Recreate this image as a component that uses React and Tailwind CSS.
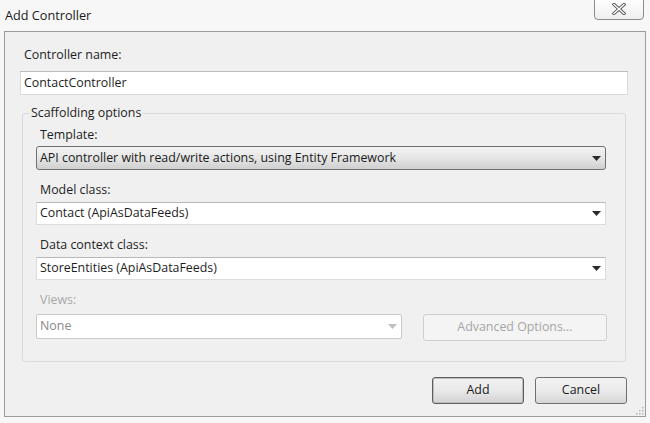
import React from 'react'

const font = { fontFamily: '"Open Sans", "Noto Sans", sans-serif' }

function Arrow({ className = 'text-[#2b2b2b]' }) {
  return (
    <svg width="9" height="5" viewBox="0 0 9 5" className={className}>
      <path d="M0 0 H9 L4.5 5 Z" fill="currentColor" />
    </svg>
  )
}

function Label({ children, disabled, className = '' }) {
  return (
    <div className={`h-4 leading-4 text-[12.4px] ${disabled ? 'text-[#a8a8a8]' : 'text-[#1e1e1e]'} ${className}`}>
      {children}
    </div>
  )
}

function Combo({ value, className = '', disabled }) {
  return (
    <div className={`flex items-center justify-between bg-white border ${disabled ? 'border-[#c9c9c9] rounded-[2px]' : 'border-[#dcdcdc] border-t-[#b8b8b8]'} ${className}`}>
      <span className={`pl-[3px] text-[12.4px] ${disabled ? 'text-[#8a8a8a]' : 'text-[#1e1e1e]'}`}>{value}</span>
      <span className="pr-[4px] flex items-center">
        <Arrow className={disabled ? 'text-[#c0c0c0]' : 'text-[#2b2b2b]'} />
      </span>
    </div>
  )
}

function Button({ children, primary, disabled, className = '' }) {
  return (
    <div
      className={`flex items-center justify-center rounded-[3px] border text-[12.4px] ${
        disabled
          ? 'border-[#cfcfcf] bg-[#f4f4f4] text-[#a6a6a6]'
          : primary
          ? 'border-[#5e5e5e] bg-gradient-to-b from-[#f2f2f2] via-[#e9e9e9] to-[#d2d2d2] text-[#1a1a1a] shadow-[inset_0_0_0_1px_#bdbdbd]'
          : 'border-[#707070] bg-gradient-to-b from-[#f2f2f2] via-[#ebebeb] to-[#d6d6d6] text-[#1a1a1a]'
      } ${className}`}
    >
      {children}
    </div>
  )
}

export default function App() {
  return (
    <div style={font} className="w-[650px] h-[423px] bg-[#f7f7f7] overflow-hidden">
      <div className="h-[31px] flex justify-between">
        <div className="pl-[5px] pt-[6px] text-[12.7px] text-[#1a1a1a] leading-[18px]">Add Controller</div>
        <div className="mr-[6px] -mt-[2px] w-[50px] h-[22px] rounded-b-[4px] border border-[#8c8c8c] bg-gradient-to-b from-[#ffffff] to-[#efefef] flex items-center justify-center">
          <svg width="14" height="12" viewBox="0 0 14 12">
            <path d="M2 1.5 L12 10.5 M12 1.5 L2 10.5" stroke="#555" strokeWidth="3.2" strokeLinecap="square" />
            <path d="M2 1.5 L12 10.5 M12 1.5 L2 10.5" stroke="#fff" strokeWidth="1.4" strokeLinecap="square" />
          </svg>
        </div>
      </div>

      <div className="relative ml-[4px] w-[642px] h-[386px] border border-[#9c9c9c] bg-[#f0f0f0]">
        <Label className="ml-[19px] mt-[15px]">Controller name:</Label>
        <div className="ml-[15px] mt-[8px] w-[608px] h-[24px] bg-white border border-[#d9d9d9] border-t-[#bcbcbc] flex items-center">
          <span className="pl-[3px] text-[12.4px] text-[#1e1e1e]">ContactController</span>
        </div>

        <div className="relative ml-[17px] mt-[18px] w-[604px] h-[249px] border border-[#d6dbe0] rounded-[3px]">
          <span className="absolute left-[6px] -top-[9px] px-[2px] bg-[#f0f0f0] leading-4 text-[12.4px] text-[#1e1e1e]">
            Scaffolding options
          </span>
          <Label className="ml-[17px] mt-[13px]">Template:</Label>
          <div className="ml-[13px] mt-[3px] w-[570px] h-[24px] rounded-[3px] border border-[#707070] bg-gradient-to-b from-[#f3f3f3] via-[#e6e6e6] to-[#cfcfcf] flex items-center justify-between">
            <span className="pl-[3px] text-[12.4px] text-[#1a1a1a]">API controller with read/write actions, using Entity Framework</span>
            <span className="pr-[4px] flex items-center"><Arrow /></span>
          </div>

          <Label className="ml-[17px] mt-[12px]">Model class:</Label>
          <Combo value="Contact (ApiAsDataFeeds)" className="ml-[13px] mt-[4px] w-[570px] h-[23px]" />

          <Label className="ml-[17px] mt-[12px]">Data context class:</Label>
          <Combo value="StoreEntities (ApiAsDataFeeds)" className="ml-[13px] mt-[4px] w-[570px] h-[23px]" />

          <Label disabled className="ml-[17px] mt-[12px]">Views:</Label>
          <div className="flex items-start mt-[6px]">
            <Combo disabled value="None" className="ml-[13px] w-[366px] h-[25px]" />
            <Button disabled className="ml-[21px] w-[184px] h-[27px]">Advanced Options...</Button>
          </div>
        </div>

        <div className="flex mt-[15px]">
          <Button primary className="ml-[427px] w-[92px] h-[27px]">Add</Button>
          <Button className="ml-[11px] w-[92px] h-[27px]">Cancel</Button>
        </div>

        <svg width="8" height="8" viewBox="0 0 8 8" className="absolute right-[1px] bottom-[1px]">
          <rect x="6" y="0" width="1.5" height="1.5" fill="#b5b5b5" />
          <rect x="3" y="3" width="1.5" height="1.5" fill="#b5b5b5" />
          <rect x="6" y="3" width="1.5" height="1.5" fill="#b5b5b5" />
          <rect x="0" y="6" width="1.5" height="1.5" fill="#b5b5b5" />
          <rect x="3" y="6" width="1.5" height="1.5" fill="#b5b5b5" />
          <rect x="6" y="6" width="1.5" height="1.5" fill="#b5b5b5" />
        </svg>
      </div>
    </div>
  )
}
